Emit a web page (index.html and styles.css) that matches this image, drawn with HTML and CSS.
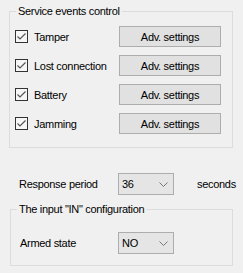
FILE: index.html
```html
<!DOCTYPE html>
<html lang="en">
<head>
  <meta charset="UTF-8">
  <title>Service events control</title>
  <link rel="stylesheet" href="styles.css">
</head>
<body>
  <fieldset class="group events">
    <legend>Service events control</legend>
    <div class="event-row">
      <label class="check"><span class="box"><svg width="11" height="11" viewBox="0 0 11 11"><path d="M1.5 5.5 L4 8 L9.5 2.5" fill="none" stroke="#555" stroke-width="1.2"/></svg></span>Tamper</label>
      <button type="button">Adv. settings</button>
    </div>
    <div class="event-row">
      <label class="check"><span class="box"><svg width="11" height="11" viewBox="0 0 11 11"><path d="M1.5 5.5 L4 8 L9.5 2.5" fill="none" stroke="#555" stroke-width="1.2"/></svg></span>Lost connection</label>
      <button type="button">Adv. settings</button>
    </div>
    <div class="event-row">
      <label class="check"><span class="box"><svg width="11" height="11" viewBox="0 0 11 11"><path d="M1.5 5.5 L4 8 L9.5 2.5" fill="none" stroke="#555" stroke-width="1.2"/></svg></span>Battery</label>
      <button type="button">Adv. settings</button>
    </div>
    <div class="event-row">
      <label class="check"><span class="box"><svg width="11" height="11" viewBox="0 0 11 11"><path d="M1.5 5.5 L4 8 L9.5 2.5" fill="none" stroke="#555" stroke-width="1.2"/></svg></span>Jamming</label>
      <button type="button">Adv. settings</button>
    </div>
  </fieldset>

  <div class="period-row">
    <span class="caption">Response period</span>
    <div class="combo"><span>36</span><svg width="9" height="5" viewBox="0 0 9 5"><path d="M0.5 0.5 L4.5 4.5 L8.5 0.5" fill="none" stroke="#777" stroke-width="1"/></svg></div>
    <span class="unit">seconds</span>
  </div>

  <fieldset class="group input-cfg">
    <legend>The input "IN" configuration</legend>
    <div class="armed-row">
      <span class="caption">Armed state</span>
      <div class="combo"><span>NO</span><svg width="9" height="5" viewBox="0 0 9 5"><path d="M0.5 0.5 L4.5 4.5 L8.5 0.5" fill="none" stroke="#777" stroke-width="1"/></svg></div>
    </div>
  </fieldset>
</body>
</html>
```

FILE: styles.css
```css
body {
  margin: 0;
  width: 243px;
  height: 273px;
  background-color: #f0f0f0;
  font-family: "Liberation Sans", Arial, sans-serif;
  font-size: 11px;
  letter-spacing: -0.3px;
  color: #000;
  overflow: hidden;
}

.group {
  box-sizing: border-box;
  border: 1px solid #dcdcdc;
  min-width: 0;
}

.group legend {
  line-height: 13px;
  padding: 0 2px;
}

.events {
  width: 224px;
  margin: 5px 0 0 9px;
  padding: 8px 11px 13px 5px;
  display: flex;
  flex-direction: column;
  gap: 8px;
}

.events legend {
  margin-left: 1px;
}

.event-row {
  display: flex;
  align-items: center;
  height: 21px;
}

.check {
  flex: 1;
  display: flex;
  align-items: center;
}

.box {
  box-sizing: border-box;
  width: 13px;
  height: 13px;
  border: 1px solid #333;
  background-color: #f6f6f6;
  margin-right: 6px;
  display: flex;
  align-items: center;
  justify-content: center;
}

.event-row button {
  width: 102px;
  height: 21px;
  padding: 0;
  border: 1px solid #adadad;
  background-color: #e1e1e1;
  font-family: inherit;
  font-size: 11px;
  letter-spacing: -0.3px;
  color: #000;
}

.period-row {
  display: flex;
  align-items: center;
  margin-top: 25px;
  padding-left: 19px;
  height: 22px;
}

.caption {
  width: 99px;
}

.combo {
  box-sizing: border-box;
  width: 56px;
  height: 22px;
  border: 1px solid #adadad;
  background-color: #e5e5e5;
  display: flex;
  align-items: center;
  justify-content: space-between;
  padding: 0 5px 0 3px;
}

.unit {
  margin-left: 23px;
}

.input-cfg {
  width: 223px;
  margin: 8px 0 0 10px;
  padding: 16px 10px 11px 9px;
}

.input-cfg legend {
  margin-left: -3px;
}

.armed-row {
  display: flex;
  align-items: center;
  height: 22px;
}

.armed-row .caption {
  width: 98px;
}
```
